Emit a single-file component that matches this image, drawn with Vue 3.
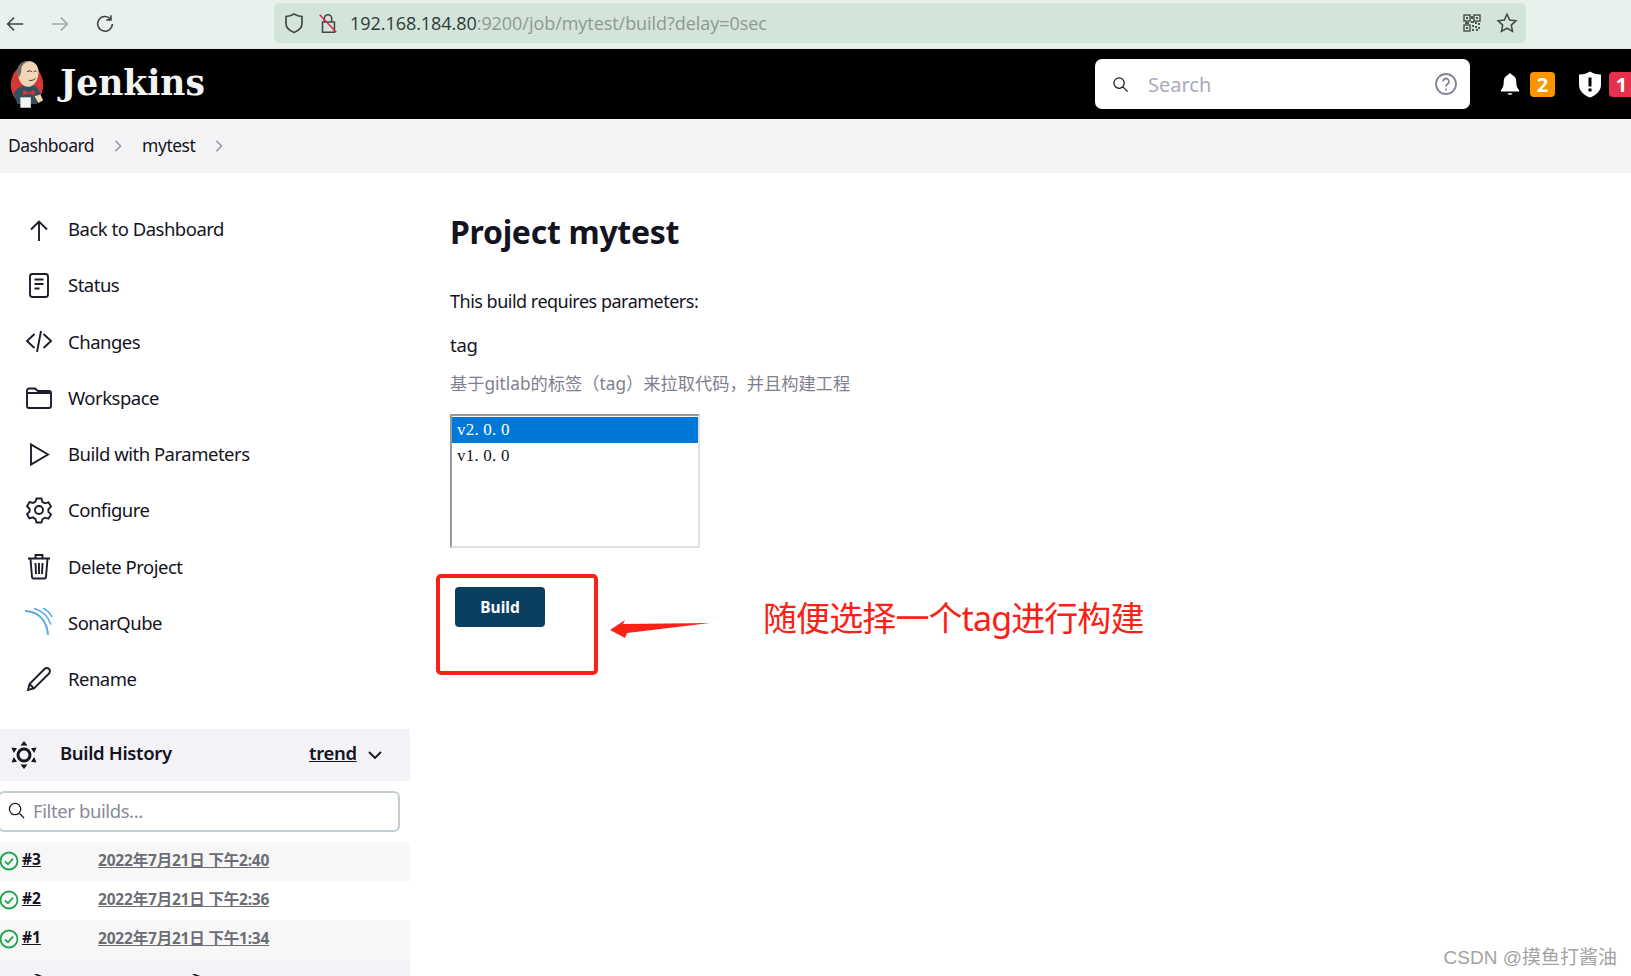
<script setup>
const navItems = [
  { label: 'Back to Dashboard', icon: 'up' },
  { label: 'Status', icon: 'doc' },
  { label: 'Changes', icon: 'code' },
  { label: 'Workspace', icon: 'folder' },
  { label: 'Build with Parameters', icon: 'play' },
  { label: 'Configure', icon: 'gear' },
  { label: 'Delete Project', icon: 'trash' },
  { label: 'SonarQube', icon: 'sonar' },
  { label: 'Rename', icon: 'pen' }
]
const builds = [
  { id: '#3', date: '2022年7月21日 下午2:40' },
  { id: '#2', date: '2022年7月21日 下午2:36' },
  { id: '#1', date: '2022年7月21日 下午1:34' }
]
</script>

<template>
  <div class="page">
    <div class="browser">
      <svg class="nav-ic" viewBox="0 0 24 24"><path d="M21 12H4M11 5l-7 7 7 7" /></svg>
      <svg class="nav-ic dim" viewBox="0 0 24 24"><path d="M3 12h17M13 5l7 7-7 7" /></svg>
      <svg class="nav-ic" viewBox="0 0 24 24"><path d="M18 6.500A8 8 0 1 0 20 12M18.500 2.500v5h-5" /></svg>
      <div class="url">
        <svg class="shield" viewBox="0 0 24 24"><path d="M12 3c3 1.800 5 2.300 8 2.500v7c0 4-3 7-8 9-5-2-8-5-8-9v-7c3-.2 5-.7 8-2.500z" /></svg>
        <svg class="lock" viewBox="0 0 24 24">
          <path class="lock-body" d="M8 11V7a4 4 0 0 1 8 0v4M6 11h13v11H6z" />
          <path class="lock-slash" d="M3 3l18 19" />
        </svg>
        <span class="host">192.168.184.80</span><span class="path">:9200/job/mytest/build?delay=0sec</span>
        <svg class="qr" viewBox="0 0 18 18">
          <path d="M1 1h6v6H1zM11 1h6v6h-6zM1 11h6v6H1z" fill="none" stroke="#4b5752" stroke-width="1.500" />
          <path d="M3 3h2v2H3zM13 3h2v2h-2zM3 13h2v2H3zM8 2h2v3H8zM8 7h3v2H8zM12 8h2v2h-2zM15 9h2v2h-2zM9 11h2v2H9zM12 12h2v2h-2zM15 13h2v2h-2zM9 15h2v2H9zM13 15h2v2h-2zM2 8h4v2H2z" fill="#4b5752" />
        </svg>
        <svg class="star" viewBox="0 0 24 24"><path d="M12 2.500l2.900 6.300 6.800.8-5 4.700 1.300 6.800-6-3.400-6 3.400 1.300-6.800-5-4.700 6.800-.8z" /></svg>
      </div>
    </div>

    <header class="topbar">
      <svg class="logo" viewBox="0 0 40 52">
        <ellipse cx="20" cy="27" rx="17" ry="21" fill="#d33833" />
        <path d="M6 36c3-6 9-9 14-9l9 1c3 3 5 7 6 11l-5 8H10z" fill="#335061" />
        <path d="M10 14C10 5 17 1 23 2c7 1 10 7 9 14-1 8-6 13-11 13-6 0-10-6-11-15z" fill="#f0d6b7" />
        <path d="M10 16C8 8 14 1 22 2c-6 2-8 5-8 9 0 3-1 5-2 8z" fill="#6d6b6d" />
        <path d="M20 13c2-1 4-1 5 0M27 13c1-.6 2-.6 3 0M22 22c2 1 5 0 7-2" fill="none" stroke="#3d2b20" stroke-width="1" />
        <path d="M16 32l6 3 6-3v6l-6-2-6 2z" fill="#d33833" />
        <path d="M13 40h11v11H13z" fill="#f4f4f2" />
        <path d="M28 39l6-2 3 6-5 3z" fill="#f0d6b7" />
      </svg>
      <span class="brand">Jenkins</span>
      <div class="search">
        <svg class="search-ic" viewBox="0 0 18 18"><circle cx="7.500" cy="7.500" r="5.500" /><path d="M11.500 11.500l5 5" /></svg>
        <span class="search-text">Search</span>
        <svg class="help" viewBox="0 0 24 24">
          <circle cx="12" cy="12" r="10" />
          <path d="M9 9.500a3 3 0 1 1 4.500 2.600c-1 .6-1.500 1.200-1.500 2.400" />
          <circle class="dot" cx="12" cy="17.500" r="1" />
        </svg>
      </div>
      <svg class="bell" viewBox="0 0 24 28"><path d="M12 1c1.200 0 1.800.9 2 2 3.500 1 5.500 4 5.500 8 0 5 1 8 3.500 10.500V23H1v-1.500C3.500 19 4.500 16 4.500 11c0-4 2-7 5.500-8 .2-1.100.8-2 2-2zM9 25h6c-.5 1.500-1.500 2-3 2s-2.500-.5-3-2z" fill="#fff" /></svg>
      <span class="badge orange">2</span>
      <svg class="alert" viewBox="0 0 24 28"><path d="M12 1c3 2 6 3 11 3v10c0 6-4 10.500-11 13C5 24.500 1 20 1 14V4c5 0 8-1 11-3z" fill="#fff" /><path d="M10.500 7h3v9h-3zM10.500 18h3v3h-3z" fill="#000" /></svg>
      <span class="badge red">1</span>
    </header>

    <nav class="crumbs">
      <span>Dashboard</span>
      <svg class="crumb-sep" viewBox="0 0 10 16"><path d="M2 2l6 6-6 6" /></svg>
      <span>mytest</span>
      <svg class="crumb-sep" viewBox="0 0 10 16"><path d="M2 2l6 6-6 6" /></svg>
    </nav>

    <div class="body">
      <aside class="side">
        <ul class="tasks">
          <li v-for="item in navItems" :key="item.label" class="task">
            <svg class="task-ic" viewBox="0 0 28 28">
              <path v-if="item.icon === 'up'" d="M14 26V7M6 14.500L14 6.500l8 8" />
              <g v-else-if="item.icon === 'doc'">
                <rect x="5" y="3" width="18" height="23" rx="2.500" />
                <path d="M9.500 8.500h9M9.500 13h9M9.500 17.500h5" />
              </g>
              <path v-else-if="item.icon === 'code'" d="M9.500 7L2 14l7.500 7M18.500 7L26 14l-7.500 7M16 4l-4 21" />
              <path v-else-if="item.icon === 'folder'" d="M2 7.500a2 2 0 0 1 2-2h6l3 2.500h11a2 2 0 0 1 2 2V23a2 2 0 0 1-2 2H4a2 2 0 0 1-2-2zM2 10h24" />
              <path v-else-if="item.icon === 'play'" d="M6 4.500v20l17-10z" />
              <g v-else-if="item.icon === 'gear'">
                <circle cx="14" cy="14" r="4" />
                <path d="M11.500 2.500h5l1 3.500 2.500 1.300 3.500-1 2.500 4.300-2.600 2.500v2.800l2.600 2.500-2.500 4.300-3.500-1-2.500 1.400-1 3.400h-5l-1-3.400L8 21.400l-3.500 1L2 18.100l2.600-2.500v-2.800L2 10.300l2.500-4.300 3.500 1 2.500-1.300z" />
              </g>
              <g v-else-if="item.icon === 'trash'">
                <path d="M3 6.500h22M10.500 6V3h7v3M5.500 7l1.500 18a1.500 1.500 0 0 0 1.500 1.500h11A1.500 1.500 0 0 0 21 25l1.500-18M10.500 11l.5 11M14 11v11M17.500 11l-.5 11" />
              </g>
              <g v-else-if="item.icon === 'sonar'" class="sonar">
                <path d="M-1 3c14 0 23 9 24 24" />
                <path d="M9 .5c8 2 14 8 17 16" />
                <path d="M18 0c4 2 7 5 9 9" />
              </g>
              <path v-else d="M3 25l1.500-6L19.500 4a3 3 0 0 1 4.500 4.500L9 23.500zM4.500 19L9 23.500" />
            </svg>
            <span>{{ item.label }}</span>
          </li>
        </ul>

        <div class="history-head">
          <svg class="sun" viewBox="0 0 28 28">
            <circle cx="14" cy="14" r="6" />
            <path class="fill" d="M14 0l3.500 4.500h-7zM14 28l-3.500-4.500h7zM1.500 6.500l5.500.8L3.800 12zM26.500 6.500L24.200 12 21 7.300zM1.500 21.500L3.800 16 7 20.700zM26.500 21.500L21 20.700l3.200-4.700z" />
          </svg>
          <span class="history-title">Build History</span>
          <span class="trend">trend</span>
          <svg class="chev" viewBox="0 0 16 10"><path d="M2 2l6 6 6-6" /></svg>
        </div>

        <div class="filter">
          <svg class="filter-ic" viewBox="0 0 18 18"><circle cx="7.500" cy="7.500" r="6" /><path d="M12 12l5 5" /></svg>
          <span>Filter builds...</span>
        </div>

        <div class="rows">
          <div v-for="b in builds" :key="b.id" class="row">
            <svg class="ok" viewBox="0 0 20 20"><circle cx="10" cy="10" r="8.500" /><path d="M6 10.500l3 2.800 5-5.600" /></svg>
            <a class="build-id">{{ b.id }}</a>
            <a class="build-date">{{ b.date }}</a>
          </div>
        </div>
        <div class="history-foot">
          <svg class="pager" viewBox="0 0 16 16"><path d="M2 0l10 4" /></svg>
          <svg class="pager second" viewBox="0 0 16 16"><path d="M2 0l10 4" /></svg>
        </div>
      </aside>

      <main class="main">
        <h1>Project mytest</h1>
        <p class="requires">This build requires parameters:</p>
        <div class="param">tag</div>
        <div class="desc">基于gitlab的标签（tag）来拉取代码，并且构建工程</div>
        <div class="listbox">
          <div class="opt selected">v2. 0. 0</div>
          <div class="opt">v1. 0. 0</div>
        </div>
        <button class="build">Build</button>
      </main>
    </div>

    <div class="red-box"></div>
    <svg class="arrow" viewBox="0 0 100 20"><path d="M0 10L15 0l-2 4 87-1-83 10-2 5z" fill="#fa2116" /></svg>
    <div class="note">随便选择一个tag进行构建</div>
    <div class="mark">CSDN @摸鱼打酱油</div>
  </div>
</template>

<style>
html, body { margin: 0; overflow: hidden; background: #fff; }
</style>

<style scoped>
.page {
  position: relative;
  width: 1631px;
  height: 976px;
  overflow: hidden;
  background: #fff;
  font-family: "Noto Sans", "Noto Sans CJK SC", sans-serif;
  color: #14141f;
}
.browser {
  height: 49px;
  box-sizing: border-box;
  padding: 0 105px 0 4px;
  display: flex;
  align-items: center;
  background: #e8f1ec;
  border-bottom: 1px solid #dfe8e3;
}
.nav-ic {
  width: 22px;
  height: 22px;
  margin-right: 23px;
  flex: none;
  fill: none;
  stroke: #3c4643;
  stroke-width: 1.700;
}
.nav-ic.dim { stroke: #a2aaa6; }
.url {
  flex: 1;
  height: 40px;
  margin: 0 0 2px 135px;
  display: flex;
  align-items: center;
  padding: 0 8px 0 8px;
  background: #d3e4da;
  border-radius: 5px;
  font-family: "Open Sans", sans-serif;
  font-size: 18px;
  letter-spacing: -0.050px;
}
.shield { width: 24px; height: 24px; fill: none; stroke: #3f4a46; stroke-width: 1.700; }
.lock { width: 22px; height: 24px; margin: 0 11px 0 11px; fill: none; stroke-width: 1.700; }
.lock-body { stroke: #3f4a46; }
.lock-slash { stroke: #e2224c; }
.host { color: #2d3a36; }
.path { color: #8d9a94; flex: 1; }
.qr { width: 18px; height: 18px; margin: 0 15px 0 1px; }
.star { width: 22px; height: 22px; fill: none; stroke: #3f4a46; stroke-width: 1.700; }

.topbar {
  height: 70px;
  display: flex;
  align-items: center;
  background: #000;
  padding-left: 8px;
}
.topbar > * { flex: none; }
.logo { width: 38px; height: 50px; margin-right: 14px; }
.brand {
  font-family: "DejaVu Serif", serif;
  font-weight: 700;
  font-size: 34.500px;
  color: #f4f4f4;
  margin-top: -3px;
  width: 1035px;
}
.search {
  width: 375px;
  height: 50px;
  box-sizing: border-box;
  display: flex;
  align-items: center;
  padding: 0 12px 0 17px;
  background: #fff;
  border-radius: 7px;
}
.search-ic { width: 17px; height: 17px; fill: none; stroke: #14141f; stroke-width: 1.300; }
.search-text { flex: 1; margin-left: 19px; font-size: 20px; color: #a9a9be; }
.help { width: 24px; height: 24px; fill: none; stroke: #83839b; stroke-width: 1.800; }
.help .dot { fill: #83839b; stroke: none; }
.bell { width: 20px; height: 28px; margin-left: 30px; }
.badge {
  width: 25px;
  height: 25px;
  border-radius: 4px;
  margin-left: 10px;
  display: flex;
  align-items: center;
  justify-content: center;
  color: #fff;
  font-weight: 700;
  font-size: 20px;
}
.orange { background: #fe9500; }
.red { background: #e6304e; margin-left: 7px; }
.alert { width: 24px; height: 29px; margin-left: 23px; }

.crumbs {
  height: 54px;
  box-sizing: border-box;
  padding: 0 0 2px 8px;
  display: flex;
  align-items: center;
  background: #f4f4f6;
  font-size: 17.500px;
  letter-spacing: -0.500px;
  color: #14141f;
}
.crumb-sep {
  width: 10px;
  height: 14px;
  margin: 2px 19px 0 19px;
  fill: none;
  stroke: #8f8f99;
  stroke-width: 1.500;
}

.body { display: flex; }
.side { width: 410px; flex: none; }
.tasks {
  list-style: none;
  margin: 0;
  padding: 27.500px 0 22.500px;
}
.task {
  height: 56.250px;
  display: flex;
  align-items: center;
  padding-left: 25px;
  font-size: 18.500px;
  letter-spacing: -0.500px;
}
.task-ic {
  width: 28px;
  height: 28px;
  margin-right: 15px;
  fill: none;
  stroke: #1c1c2b;
  stroke-width: 1.900;
  overflow: hidden;
}
.sonar path { stroke: #5aa9e0; stroke-width: 1.500; }
.sonar path:first-child { stroke-width: 2; }

.history-head {
  height: 52px;
  display: flex;
  align-items: center;
  padding-left: 10px;
  background: #f2f2f7;
}
.sun { width: 28px; height: 28px; fill: none; stroke: #14141f; stroke-width: 3; }
.sun .fill { fill: #14141f; stroke: none; }
.history-title {
  margin: 0 0 6px 22px;
  width: 249px;
  font-size: 18.500px;
  font-weight: 600;
  letter-spacing: -0.350px;
}
.trend {
  margin-bottom: 6px;
  font-size: 18.500px;
  font-weight: 600;
  text-decoration: underline;
  letter-spacing: -0.350px;
}
.chev { width: 16px; height: 10px; margin-left: 10px; fill: none; stroke: #14141f; stroke-width: 1.800; }

.filter {
  width: 402px;
  height: 41px;
  box-sizing: border-box;
  margin: 10px 0 10px -2px;
  padding: 0 0 2px 8px;
  display: flex;
  align-items: center;
  border: 2px solid #c3ced2;
  border-radius: 6px;
  font-size: 18.500px;
  letter-spacing: -0.400px;
  color: #8a8a99;
}
.filter-ic {
  width: 17px;
  height: 17px;
  margin-right: 8px;
  fill: none;
  stroke: #14141f;
  stroke-width: 1.300;
}

.row {
  height: 39.100px;
  display: flex;
  align-items: center;
  font-size: 15.500px;
  font-weight: 700;
}
.row:nth-child(odd) { background: #f7f7f7; }
.ok {
  width: 20px;
  height: 20px;
  margin: 0 0 1px -1.500px;
  flex: none;
  fill: none;
  stroke: #1ea64f;
  stroke-width: 1.800;
}
.build-id {
  width: 76px;
  margin: 0 0 5px 3.500px;
  text-decoration: underline;
  color: #14141f;
}
.build-date {
  margin-bottom: 5px;
  color: #6d6d75;
  text-decoration: underline;
  letter-spacing: -0.200px;
  white-space: nowrap;
}
.history-foot {
  height: 21px;
  background: #f2f2f7;
  overflow: hidden;
}
.pager {
  width: 16px;
  height: 16px;
  margin: 14px 0 0 33px;
  fill: none;
  stroke: #14141f;
  stroke-width: 1.600;
}
.pager.second { margin-left: 142px; }

.main { padding: 37px 0 0 40px; flex: 1; }
h1 {
  margin: 0;
  font-size: 32px;
  line-height: 44px;
  font-weight: 700;
  letter-spacing: -0.300px;
  color: #14141f;
}
.requires {
  margin: 34px 0 0;
  font-size: 18px;
  line-height: 26px;
  letter-spacing: -0.500px;
}
.param { margin-top: 18px; font-size: 18.500px; line-height: 26px; letter-spacing: -0.300px; }
.desc {
  margin-top: 13px;
  font-size: 17.250px;
  line-height: 26px;
  color: #7f7f8e;
  white-space: nowrap;
}
.listbox {
  width: 250px;
  height: 134px;
  box-sizing: border-box;
  margin-top: 17px;
  padding-top: 1px;
  border: 2px solid #e0e0e0;
  border-top-color: #999;
  border-left-color: #999;
  font-family: "Liberation Serif", "Noto Serif CJK SC", serif;
  font-size: 17px;
}
.opt {
  height: 25.500px;
  line-height: 25px;
  padding-left: 5px;
  letter-spacing: 0.200px;
  color: #14141f;
}
.selected { background: #0078d7; color: #fff; }
.build {
  display: block;
  width: 90px;
  height: 40px;
  margin: 39px 0 0 5px;
  padding: 0;
  border: 0;
  border-radius: 4px;
  background: #0b3f60;
  color: #fff;
  font-family: inherit;
  font-size: 15.500px;
  font-weight: 700;
}

.red-box {
  position: absolute;
  left: 436px;
  top: 574px;
  width: 162px;
  height: 101px;
  box-sizing: border-box;
  border: 4px solid #fa2116;
  border-radius: 5px;
}
.arrow { position: absolute; left: 610px; top: 620px; width: 100px; height: 20px; }
.note {
  position: absolute;
  left: 763px;
  top: 594px;
  font-family: "Noto Sans", "Noto Sans CJK SC", sans-serif;
  font-size: 34px;
  line-height: 48px;
  letter-spacing: -0.900px;
  color: #fa2116;
  white-space: nowrap;
}
.mark {
  position: absolute;
  right: 14px;
  top: 945px;
  font-family: "Liberation Sans", "Noto Sans CJK SC", sans-serif;
  font-size: 19px;
  line-height: 26px;
  color: #a3a3a3;
  white-space: nowrap;
}
</style>
